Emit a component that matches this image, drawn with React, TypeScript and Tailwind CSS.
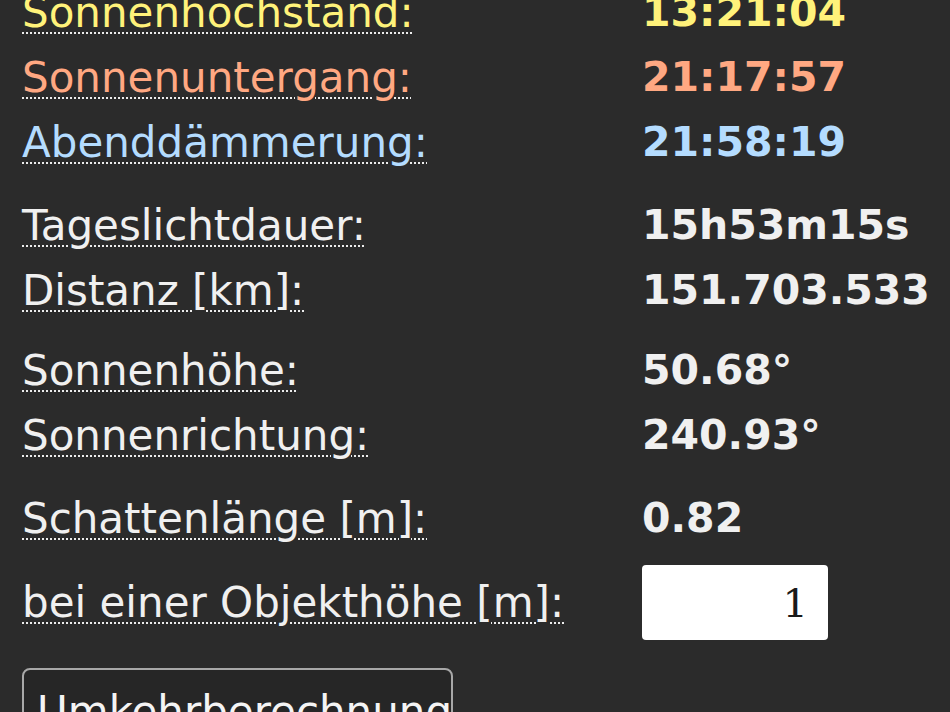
const groups = [
  [
    { label: "Sonnenhochstand:", value: "13:21:04", color: "text-[#fff27a]" },
    { label: "Sonnenuntergang:", value: "21:17:57", color: "text-[#ffa882]" },
    { label: "Abenddämmerung:", value: "21:58:19", color: "text-[#b4dcff]" },
  ],
  [
    { label: "Tageslichtdauer:", value: "15h53m15s", color: "text-[#f0f0f0]" },
    { label: "Distanz [km]:", value: "151.703.533", color: "text-[#f0f0f0]" },
  ],
  [
    { label: "Sonnenhöhe:", value: "50.68°", color: "text-[#f0f0f0]" },
    { label: "Sonnenrichtung:", value: "240.93°", color: "text-[#f0f0f0]" },
  ],
];

const spacers = ["h-[18px]", "h-[15px]", "h-[18px]"];

function Label({ text, color }: { text: string; color: string }) {
  return (
    <span
      className={`${color} underline decoration-dotted decoration-[#ececec] decoration-[2px] underline-offset-[5px]`}
    >
      {text}
    </span>
  );
}

export default function App() {
  return (
    <div className="h-[712px] w-[950px] overflow-hidden bg-[#2b2b2b] pl-[22px] font-['DejaVu_Sans',Verdana,sans-serif] text-[42px] leading-[65px] text-[#f0f0f0]">
      <div className="-mt-[20px]">
        {groups.map((rows, gi) => (
          <div key={gi}>
            {rows.map((r) => (
              <div key={r.label} className="grid h-[65px] grid-cols-[620px_1fr]">
                <div>
                  <Label text={r.label} color={r.color} />
                </div>
                <div className={`${r.color} text-[41px] font-bold`}>{r.value}</div>
              </div>
            ))}
            <div className={spacers[gi]} />
          </div>
        ))}

        <div className="grid h-[65px] grid-cols-[620px_1fr]">
          <div>
            <Label text="Schattenlänge [m]:" color="text-[#f0f0f0]" />
          </div>
          <div className="text-[41px] font-bold">0.82</div>
        </div>

        <div className="mt-[14px] grid grid-cols-[620px_1fr] items-center">
          <div>
            <Label text="bei einer Objekthöhe [m]:" color="text-[#f0f0f0]" />
          </div>
          <input
            type="text"
            defaultValue="1"
            className="h-[75px] w-[186px] rounded-[4px] bg-white pr-[20px] text-right font-['DejaVu_Serif',serif] text-[40px] text-[#1a1a1a] outline-none"
          />
        </div>

        <button className="mt-[28px] h-[80px] w-[431px] rounded-[8px] border-2 border-[#a8a8a8] bg-[#262626] px-[13px] pt-[6px] text-left leading-[65px] text-[#f4f4f4]">
          Umkehrberechnung
        </button>
      </div>
    </div>
  );
}
